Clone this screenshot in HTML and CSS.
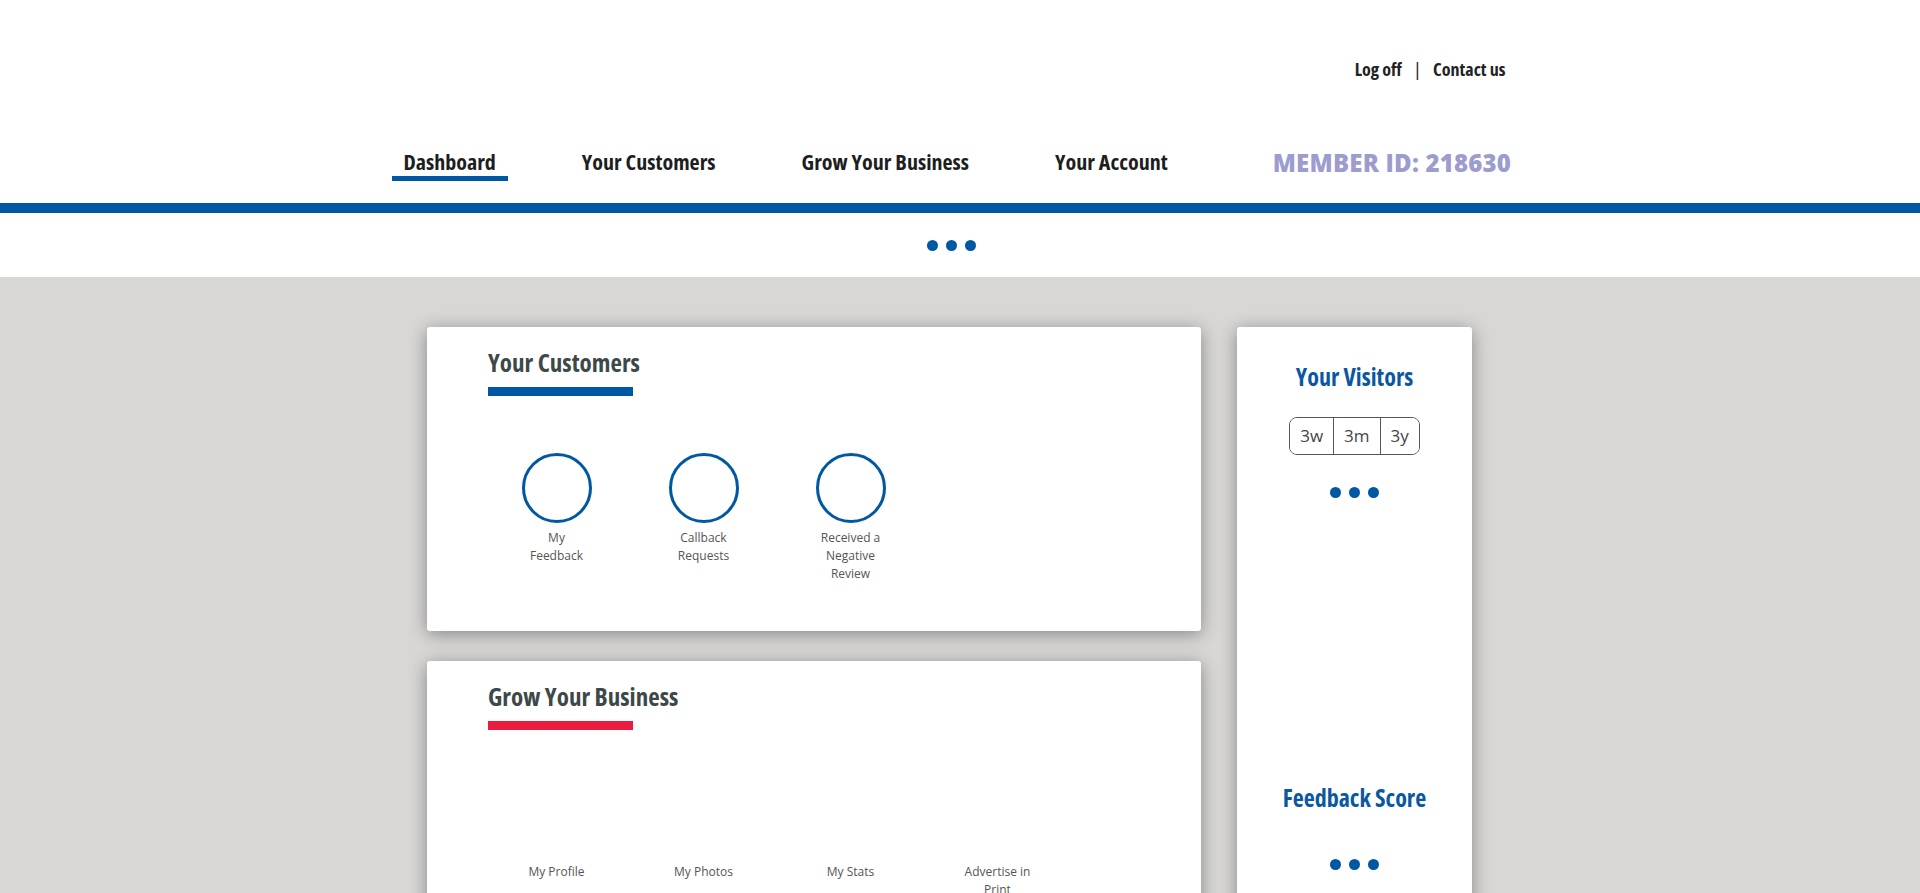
FILE: index.html
```html
<!DOCTYPE html>
<html lang="en">
<head>
  <meta charset="UTF-8" />
  <meta name="viewport" content="width=device-width, initial-scale=1.0" />
  <title>Dashboard</title>
  <link rel="stylesheet" href="styles.css">
</head>
<body>
  <header class="site-header">
    <div class="header-inner">
      <div class="util-links">
        <a href="#">Log off</a>
        <span class="sep">|</span>
        <a href="#">Contact us</a>
      </div>
      <nav class="main-nav">
        <a class="nav-link active" href="#">Dashboard</a>
        <a class="nav-link" href="#">Your Customers</a>
        <a class="nav-link" href="#">Grow Your Business</a>
        <a class="nav-link" href="#">Your Account</a>
        <span class="member-id">MEMBER ID: 218630</span>
      </nav>
    </div>
    <div class="header-rule"></div>
    <div class="loader">
      <span class="dot"></span><span class="dot"></span><span class="dot"></span>
    </div>
  </header>

  <main class="dash">
    <div class="dash-inner">
      <div class="col-main">
        <section class="card">
          <h2 class="card-title">Your Customers</h2>
          <div class="title-bar blue"></div>
          <div class="tiles">
            <a class="tile" href="#"><span class="ring"></span><span class="tile-label">My Feedback</span></a>
            <a class="tile" href="#"><span class="ring"></span><span class="tile-label">Callback Requests</span></a>
            <a class="tile" href="#"><span class="ring"></span><span class="tile-label">Received a Negative Review</span></a>
          </div>
        </section>

        <section class="card">
          <h2 class="card-title">Grow Your Business</h2>
          <div class="title-bar red"></div>
          <div class="tiles">
            <a class="tile" href="#"><span class="icon-blank"></span><span class="tile-label">My Profile</span></a>
            <a class="tile" href="#"><span class="icon-blank"></span><span class="tile-label">My Photos</span></a>
            <a class="tile" href="#"><span class="icon-blank"></span><span class="tile-label">My Stats</span></a>
            <a class="tile" href="#"><span class="icon-blank"></span><span class="tile-label">Advertise in Print</span></a>
          </div>
        </section>
      </div>

      <aside class="card side">
        <h3 class="side-title">Your Visitors</h3>
        <div class="range">
          <button class="range-btn">3w</button>
          <button class="range-btn">3m</button>
          <button class="range-btn">3y</button>
        </div>
        <div class="dots">
          <span class="dot"></span><span class="dot"></span><span class="dot"></span>
        </div>
        <div class="chart-area"></div>
        <h3 class="side-title">Feedback Score</h3>
        <div class="dots score-dots">
          <span class="dot"></span><span class="dot"></span><span class="dot"></span>
        </div>
      </aside>
    </div>
  </main>
</body>
</html>
```

FILE: styles.css
```css
* {
  margin: 0;
  padding: 0;
  box-sizing: border-box;
}
body {
  background-color: #d8d7d5;
  font-family: "Open Sans", "Noto Sans", sans-serif;
  color: #222;
  padding-right: 17px;
}
a {
  text-decoration: none;
  color: inherit;
}
.site-header {
  margin-right: -17px;
  padding-right: 17px;
  background-color: white;
}
.header-inner {
  width: 1120px;
  margin: 0 auto;
  padding-top: 58px;
}
.util-links {
  display: flex;
  justify-content: flex-end;
  align-items: center;
  padding-right: 6px;
  font-size: 18px;
  line-height: 22px;
  font-weight: 700;
  font-stretch: 75%;
  color: #222;
}
.util-links .sep {
  margin: 0 12px;
  font-weight: 400;
}
.main-nav {
  display: flex;
  align-items: flex-start;
  margin-top: 68px;
}
.nav-link {
  font-size: 22px;
  line-height: 27px;
  font-weight: 700;
  font-stretch: 75%;
  color: #1e1e1e;
  padding: 0 12px 1px;
  border-bottom: 5px solid transparent;
  margin-right: 62px;
}
.nav-link.active {
  border-bottom-color: #0057a3;
}
.member-id {
  margin-left: 31px;
  font-size: 24px;
  line-height: 29px;
  font-weight: 800;
  letter-spacing: 0.2px;
  color: #9c9ccf;
}
.header-rule {
  height: 10px;
  margin-top: 22px;
  margin-right: -17px;
  background-color: #0057a3;
}
.loader {
  height: 64px;
  display: flex;
  justify-content: center;
  align-items: center;
  gap: 8px;
}
.dot {
  width: 11px;
  height: 11px;
  border-radius: 50%;
  background-color: #0057a3;
}
.dash {
  padding: 50px 0 0;
  min-height: 2190px;
}
.dash-inner {
  width: 1049px;
  padding-right: 4px;
  margin: 0 auto;
  display: flex;
  align-items: flex-start;
  gap: 36px;
}
.col-main {
  width: 774px;
  display: flex;
  flex-direction: column;
  gap: 30px;
}
.card {
  background-color: white;
  border-radius: 3px;
  box-shadow: 0 3px 18px rgba(0, 0, 0, 0.38);
  padding: 21px 61px 48px;
}
.card-title {
  font-size: 25px;
  line-height: 29px;
  font-weight: 700;
  font-stretch: 75%;
  color: #3d4848;
}
.title-bar {
  width: 145px;
  height: 9px;
  margin-top: 10px;
}
.title-bar.blue {
  background-color: #0057a3;
}
.title-bar.red {
  background-color: #ea1d40;
}
.tiles {
  display: flex;
  margin: 57px 0 0 -5px;
}
.tile {
  width: 147px;
  display: flex;
  flex-direction: column;
  align-items: center;
}
.ring {
  width: 70px;
  height: 70px;
  border: 3px solid #0057a3;
  border-radius: 50%;
}
.icon-blank {
  width: 70px;
  height: 70px;
}
.tile-label {
  width: 72px;
  margin-top: 6px;
  font-size: 12px;
  line-height: 18px;
  color: #555;
  text-align: center;
}
.side {
  width: 235px;
  min-height: 900px;
  padding: 36px 0 40px;
  display: flex;
  flex-direction: column;
  align-items: center;
}
.side-title {
  font-size: 24px;
  line-height: 28px;
  font-weight: 700;
  font-stretch: 75%;
  color: #0a57a2;
}
.range {
  display: flex;
  margin-top: 26px;
  border: 1px solid #555;
  border-radius: 8px;
  overflow: hidden;
}
.range-btn {
  border: none;
  background: white;
  font-family: "Open Sans", "Noto Sans", sans-serif;
  font-size: 17px;
  line-height: 36px;
  color: #444;
  padding: 0 10px;
}
.range-btn + .range-btn {
  border-left: 1px solid #555;
}
.dots {
  display: flex;
  gap: 8px;
  margin-top: 32px;
}
.chart-area {
  height: 286px;
}
.score-dots {
  margin-top: 47px;
}
```
